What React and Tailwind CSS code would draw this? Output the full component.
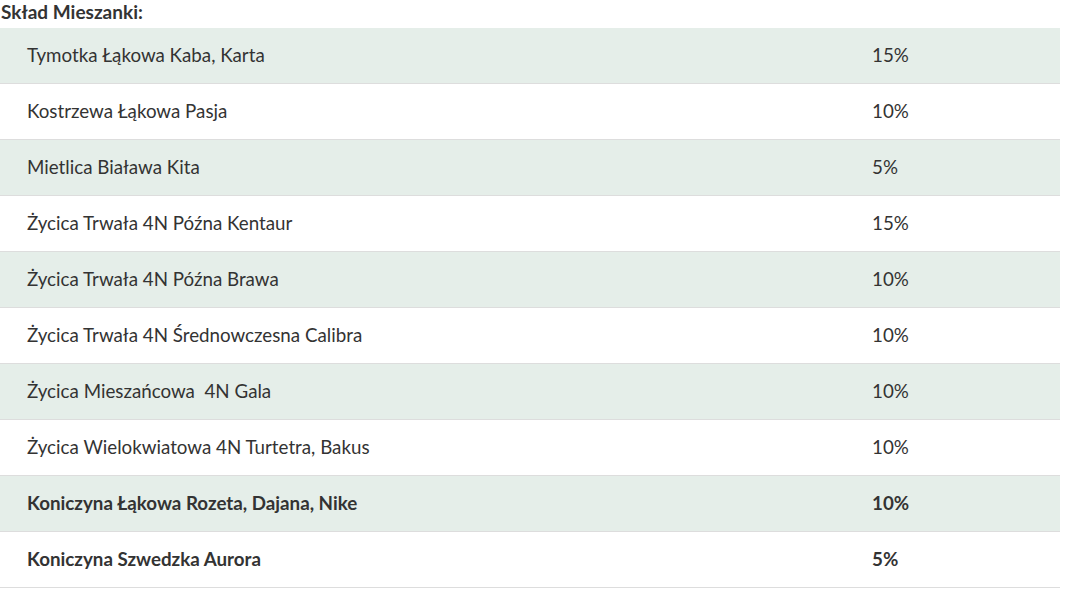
import React from 'react';

const rows = [
  { name: 'Tymotka Łąkowa Kaba, Karta', pct: '15%' },
  { name: 'Kostrzewa Łąkowa Pasja', pct: '10%' },
  { name: 'Mietlica Biaława Kita', pct: '5%' },
  { name: 'Życica Trwała 4N Późna Kentaur', pct: '15%' },
  { name: 'Życica Trwała 4N Późna Brawa', pct: '10%' },
  { name: 'Życica Trwała 4N Średnowczesna Calibra', pct: '10%' },
  { name: 'Życica Mieszańcowa\u00a0 4N Gala', pct: '10%' },
  { name: 'Życica Wielokwiatowa 4N Turtetra, Bakus', pct: '10%' },
  { name: 'Koniczyna Łąkowa Rozeta, Dajana, Nike', pct: '10%', bold: true },
  { name: 'Koniczyna Szwedzka Aurora', pct: '5%', bold: true },
];

export default function App() {
  return (
    <div className="w-[1067px] h-[589px] bg-white text-[#333] font-['Lato','Open_Sans',sans-serif] overflow-hidden">
      <h3 className="h-[28px] pl-[1px] text-[19px] font-bold leading-[24px] text-[#333]">Skład Mieszanki:</h3>
      <div className="w-[1060px]">
        {rows.map((r, i) => (
          <div
            key={i}
            className={`grid grid-cols-[845px_1fr] h-[56px] items-center border-b border-[#dddddd] text-[18.75px] leading-[24px] ${
              i % 2 === 0 ? 'bg-[#e5eee9]' : 'bg-white'
            } ${r.bold ? 'font-bold' : ''}`}
          >
            <div className="pl-[27px] pb-[1px]">{r.name}</div>
            <div className="pl-[27px] pb-[1px]">{r.pct}</div>
          </div>
        ))}
      </div>
    </div>
  );
}
